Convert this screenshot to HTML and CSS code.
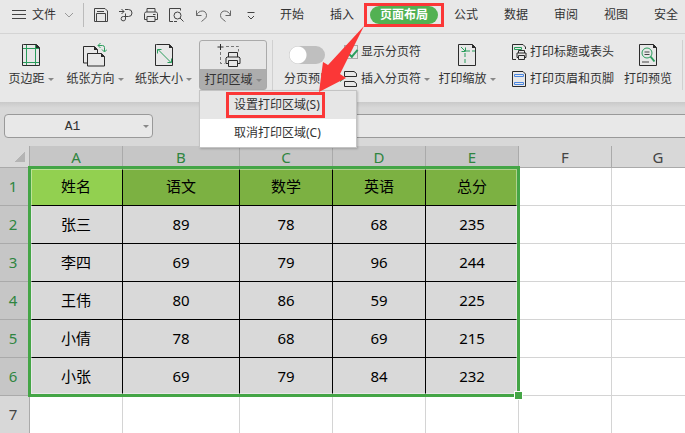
FILE: index.html
```html
<!DOCTYPE html>
<html lang="zh-CN">
<head>
    <meta charset="UTF-8">
    <meta name="viewport" content="width=device-width, initial-scale=1.0">
    <title>表格 - 页面布局</title>
    <link rel="stylesheet" href="styles.css">
</head>
<body>
    <header class="topbar">
        <button class="file-btn">
            <svg class="icon" width="14" height="12" viewBox="0 0 14 12"><path d="M0 1.500h14M0 5.500h14M0 9.500h14"/></svg>
            <span>文件</span>
            <svg class="icon muted" width="10" height="8" viewBox="0 0 10 8"><path d="M1 2l4 4 4-4"/></svg>
        </button>
        <div class="quick">
            <button aria-label="保存"><svg class="icon" width="16" height="16" viewBox="0 0 16 16"><path d="M1.500 1.500h10.500l2.500 2.500v10.500h-13zM3.500 14v-7.500h9v7.500M4 4.500h7"/></svg></button>
            <button aria-label="输出"><svg class="icon" width="16" height="16" viewBox="0 0 16 16"><path d="M1 4.500h5M3.500 2l2.500 2.500-2.500 2.500M7 2.500h3.500a3.500 3.500 0 0 1 0 7h-5a2.200 2.200 0 1 0 2 2.500v-5.500"/></svg></button>
            <button aria-label="打印"><svg class="icon" width="16" height="16" viewBox="0 0 16 16"><path d="M4 5v-3.500h8v3.500M4 12.500h-2.500v-6l1-1.500h11l1 1.500v6h-2.500M4 9.500h8v5h-8zM10 7.500h2.500"/></svg></button>
            <button aria-label="打印预览"><svg class="icon" width="16" height="16" viewBox="0 0 16 16"><path d="M5 14.500h-3.500v-13h11v2M6 14.500h3"/><circle cx="9.500" cy="8.500" r="3.500"/><path d="M12 11l3.500 3.500"/></svg></button>
            <button aria-label="撤销"><svg class="icon soft" width="16" height="16" viewBox="0 0 16 16"><path d="M3.500 3.500v5h5M3.500 8.500c2-6 10-6 10 0 0 3-3 4-5 6"/></svg></button>
            <button aria-label="恢复"><svg class="icon soft" width="16" height="16" viewBox="0 0 16 16"><path d="M12.500 3.500v5h-5M12.500 8.500c-2-6-10-6-10 0 0 3 3 4 5 6"/></svg></button>
            <button aria-label="更多"><svg class="icon" width="16" height="16" viewBox="0 0 16 16"><path d="M4.500 5.500h7M5 9l3 3 3-3"/></svg></button>
        </div>
        <nav class="tabs">
            <a href="#">开始</a>
            <a href="#">插入</a>
            <a href="#" class="active">页面布局</a>
            <a href="#">公式</a>
            <a href="#">数据</a>
            <a href="#">审阅</a>
            <a href="#">视图</a>
            <a href="#">安全</a>
        </nav>
    </header>

    <section class="ribbon">
        <button class="tool margins">
            <svg class="icon" width="24" height="24" viewBox="0 0 24 24"><path class="green" d="M7.500 2v20M16.500 2v20M4 5.500h16M4 19.500h16"/><path class="dark" d="M4.500 1.500h13l3 3v18h-17v-21z"/><path class="fill" d="M17 1l4 4h-4z"/></svg>
            <span class="caption">页边距<i class="caret"></i></span>
        </button>
        <button class="tool orient">
            <svg class="icon" width="24" height="24" viewBox="0 0 24 24"><path class="dark" d="M4.500 20h-4v-16.500h11l3 3v3.500M4.500 10.500h14l3 3v9.500h-17z"/><path class="fill" d="M11 3l4 4h-4zM18 10l4 4h-4z"/><path class="green" d="M17.500 0l-2.500 2.500 2.500 2.500M15 2.500h4.500a2 2 0 0 1 2 2v4M19 6.500l2.500 2.500 2.500-2.500"/></svg>
            <span class="caption">纸张方向<i class="caret"></i></span>
        </button>
        <button class="tool size">
            <svg class="icon" width="24" height="24" viewBox="0 0 24 24"><path class="green" d="M6 6.500l13 13M5.500 10.500v-4h4M19.500 15.500v4h-4"/><path class="dark" d="M4.500 1.500h13l3 3v18h-17v-21z"/><path class="fill" d="M17 1l4 4h-4z"/></svg>
            <span class="caption">纸张大小<i class="caret"></i></span>
        </button>
        <div class="area-wrap">
            <button class="tool area">
                <svg class="icon" width="28" height="24" viewBox="0 0 28 24"><path class="dark" d="M5.500 0v6M2.500 3h6M13.500 13v-4.500h9v4.500M13.500 19.500h-2.500v-5.500l1-1h12l1 1v5.500h-2.500M13.500 16.500h9v6h-9z"/><path class="dash" d="M11 2.500h12.500v5M5.500 8v11.500h4"/></svg>
                <span class="caption">打印区域<i class="caret"></i></span>
            </button>
            <div class="menu">
                <button class="menu-item hover">设置打印区域(S)</button>
                <button class="menu-item">取消打印区域(C)</button>
            </div>
        </div>
        <div class="breaks">
            <label class="tool preview">
                <input type="checkbox" class="switch">
                <span class="caption">分页预览</span>
            </label>
            <div class="rows">
                <label class="row"><input type="checkbox" class="tick" checked>显示分页符</label>
                <button class="row">
                    <svg class="icon" width="18" height="18" viewBox="0 0 18 18"><path class="dark" d="M4.500 1.500v5h12v-3l-2.500-2h-9.500M4.500 16.500v-5h9.500l2.500 2v3z"/><path class="green-fill" d="M0 6l4 3-4 3z"/></svg>
                    插入分页符<i class="caret"></i>
                </button>
            </div>
        </div>
        <button class="tool scale">
            <svg class="icon" width="24" height="24" viewBox="0 0 24 24"><path class="dark" d="M3.500 1.500h14l3 3v18h-17z"/><path class="fill" d="M17 1l4 4h-4z"/><path class="green" d="M6 4l4 4M10.500 4.500v4h-4"/><path class="green dashed" d="M11 8h9M10 10v12"/></svg>
            <span class="caption">打印缩放<i class="caret"></i></span>
        </button>
        <div class="rows titles">
            <button class="row">
                <svg class="icon" width="16" height="16" viewBox="0 0 16 16"><path class="dark" d="M5 15.500h-3.500v-15h10.500l2.500 2.500v2M7.500 9v-2.500h6v2.500M7.500 13.500h-1.500v-4.500h9v4.500h-1.500M7.500 11.500h6v4h-6z"/><path class="green" d="M3.500 3.500h7v2h-7z"/></svg>
                打印标题或表头
            </button>
            <button class="row">
                <svg class="icon" width="16" height="16" viewBox="0 0 16 16"><path class="dark" d="M1.500.5h10.500l2.500 2.500v12.500h-13z"/><path class="blue" d="M3.500 3.500h9v2h-9zM3.500 11.500h9v2h-9z"/></svg>
                打印页眉和页脚
            </button>
        </div>
        <button class="tool print">
            <svg class="icon" width="24" height="24" viewBox="0 0 24 24"><path class="dark" d="M3.500 1.500h14l3 3v18h-17z"/><path class="fill" d="M17 1l4 4h-4z"/><circle class="green" cx="11" cy="10" r="5"/><path class="green thick" d="M14.500 13.500l4 5"/><path d="M8.500 9h5M8.500 11.500h5M6 19h7"/></svg>
            <span class="caption">打印预览</span>
        </button>
    </section>

    <div class="formula-bar">
        <div class="name-box">
            <input type="text" value="A1" aria-label="名称框">
            <i class="caret"></i>
        </div>
        <input type="text" class="formula" aria-label="编辑栏">
    </div>

    <main class="sheet">
        <table>
            <colgroup><col class="c-num"><col><col class="c-wide"><col><col><col><col><col></colgroup>
            <thead>
                <tr><th class="corner"></th><th class="on">A</th><th class="on">B</th><th class="on">C</th><th class="on">D</th><th class="on">E</th><th>F</th><th>G</th></tr>
            </thead>
            <tbody>
                <tr class="sel title"><th>1</th><td class="first">姓名</td><td>语文</td><td>数学</td><td>英语</td><td>总分</td><td></td><td></td></tr>
                <tr class="sel"><th>2</th><td>张三</td><td>89</td><td>78</td><td>68</td><td>235</td><td></td><td></td></tr>
                <tr class="sel"><th>3</th><td>李四</td><td>69</td><td>79</td><td>96</td><td>244</td><td></td><td></td></tr>
                <tr class="sel"><th>4</th><td>王伟</td><td>80</td><td>86</td><td>59</td><td>225</td><td></td><td></td></tr>
                <tr class="sel"><th>5</th><td>小倩</td><td>78</td><td>68</td><td>69</td><td>215</td><td></td><td></td></tr>
                <tr class="sel"><th>6</th><td>小张</td><td>69</td><td>79</td><td>84</td><td>232</td><td></td><td></td></tr>
                <tr><th>7</th><td></td><td></td><td></td><td></td><td></td><td></td><td></td></tr>
            </tbody>
        </table>
        <div class="selection"></div>
    </main>

    <svg class="arrow" width="60" height="74" viewBox="0 0 60 74"><path d="M54 2L18 41 13 38 9 68 36 54 30 50z"/></svg>
</body>
</html>
```
FILE: styles.css
```css
* {
    box-sizing: border-box;
}
body {
    margin: 0;
    height: 100vh;
    overflow: hidden;
    position: relative;
    display: flex;
    flex-direction: column;
    background: #fff;
    color: #333;
    font-family: "Noto Sans", "Noto Sans CJK SC", sans-serif;
    font-size: 12px;
    line-height: 18px;
}
button, input {
    margin: 0;
    padding: 0;
    border: 0;
    background: none;
    color: inherit;
    font: inherit;
}
svg {
    display: block;
    flex: none;
}
.icon {
    fill: none;
    stroke: #444;
}
.icon.muted {
    stroke: #999;
}
.icon.soft {
    stroke: #666;
}
.icon .dark {
    stroke: #2b2b2b;
}
.icon .fill {
    fill: #2b2b2b;
    stroke: none;
}
.icon .green {
    stroke: #2a9d5c;
}
.icon .green-fill {
    fill: #2a9d5c;
    stroke: none;
}
.icon .thick {
    stroke-width: 2;
}
.icon .blue {
    stroke: #4a86e0;
}
.icon .dash {
    stroke: #777;
    stroke-dasharray: 3 2;
}
.icon .dashed {
    stroke-dasharray: 4 2;
}
.caret {
    display: inline-block;
    flex: none;
    margin-left: 3px;
    border: 3px solid transparent;
    border-top-color: #888;
    border-bottom: 0;
    vertical-align: middle;
}

/* top bar */
.topbar {
    display: flex;
    align-items: center;
    flex: none;
    height: 34px;
    padding-bottom: 4px;
    background: #e8e8e8;
    border-bottom: 1px solid #d4d4d4;
    white-space: nowrap;
}
.file-btn {
    display: flex;
    align-items: center;
    flex: none;
    gap: 6px;
    height: 24px;
    padding: 0 9px 0 12px;
    border-right: 1px solid #bbb;
}
.file-btn span {
    margin-right: 2px;
}
.quick {
    display: flex;
    flex: none;
    gap: 9px;
    padding-left: 9px;
}
.tabs {
    display: flex;
    margin-left: 8px;
}
.tabs a {
    flex: none;
    width: 50px;
    color: #333;
    text-align: center;
    text-decoration: none;
}
.tabs .active {
    position: relative;
    width: 68px;
    margin: 0 3px;
    border-radius: 9px;
    background: #52b152;
    color: #fff;
    font-weight: bold;
}
.tabs .active::after {
    content: "";
    position: absolute;
    inset: -3px -6px;
    border: 3px solid #fb3737;
}

/* ribbon */
.ribbon {
    display: flex;
    flex: none;
    height: 68px;
    padding-top: 6px;
    background: #e8e8e8;
    white-space: nowrap;
}
.tool {
    display: flex;
    flex-direction: column;
    align-items: center;
    flex: none;
    height: 50px;
    padding-top: 3px;
    gap: 3px;
}
.caption {
    display: block;
}
.margins {
    width: 62px;
}
.orient {
    width: 66px;
}
.size {
    width: 71px;
}
.area-wrap {
    position: relative;
    flex: none;
}
.area {
    width: 68px;
    border: 1px solid #aaa;
    border-radius: 3px;
    background: linear-gradient(#e6e6e6 28px, #adadad 28px);
}
.area .icon {
    margin-right: 8px;
}
.menu {
    position: absolute;
    z-index: 2;
    top: 50px;
    left: 0;
    width: 158px;
    border: 1px solid #c4c4c4;
    background: #fff;
    box-shadow: 1px 1px 2px rgba(0, 0, 0, 0.2);
}
.menu-item {
    display: block;
    position: relative;
    width: 100%;
    height: 28px;
    padding-left: 34px;
    text-align: left;
}
.menu-item.hover {
    background: #e6e6e6;
}
.menu-item.hover::after {
    content: "";
    position: absolute;
    inset: 1px 31px 1px 26px;
    border: 3px solid #fb3737;
}
.breaks {
    display: flex;
    flex: none;
    height: 58px;
    margin-left: 5px;
    padding-left: 7px;
    border-left: 1px solid #d0d0d0;
}
.preview {
    width: 56px;
}
.switch {
    appearance: none;
    width: 36px;
    height: 18px;
    margin: 3px;
    border-radius: 9px;
    background: radial-gradient(circle at 9px 9px, #fff 8px, #bfbfbf 9px);
}
.preview .switch {
    align-self: flex-start;
    margin-left: 9px;
}
.rows {
    display: flex;
    flex-direction: column;
    flex: none;
    gap: 9px;
    padding-top: 3px;
}
.breaks .rows {
    margin-left: 4px;
}
.row {
    display: flex;
    align-items: center;
    height: 18px;
    gap: 3px;
}
.tick {
    appearance: none;
    width: 14px;
    height: 14px;
    margin-left: 4px;
    border: 1px solid #aaa;
    position: relative;
}
.tick:checked::before {
    content: "";
    position: absolute;
    top: 1px;
    left: 4px;
    width: 5px;
    height: 8px;
    border: solid #2a9d5c;
    border-width: 0 2px 2px 0;
    transform: rotate(40deg);
}
.row .caret {
    margin-left: 0;
}
.scale {
    width: 74px;
}
.titles {
    margin-left: 7px;
}
.print {
    width: 69px;
    border-right: 1px solid #d0d0d0;
}

/* name box and formula input */
.formula-bar {
    display: flex;
    flex: none;
    height: 44px;
    padding-top: 12px;
    background: linear-gradient(#c9c9c9, #d8d8d8 6px);
}
.name-box {
    display: flex;
    align-items: center;
    flex: none;
    width: 149px;
    height: 24px;
    margin-left: 4px;
    padding-right: 3px;
    border: 1px solid #999;
    border-radius: 4px;
    background: #e8e8e8;
}
.name-box input {
    flex: 1;
    min-width: 0;
    padding-top: 2px;
    font-family: "Liberation Mono", monospace;
    font-size: 13px;
    text-align: center;
}
.formula {
    flex: 1;
    height: 24px;
    margin-left: 150px;
    border: 1px solid #999;
    border-right: 0;
    background: #e8e8e8;
}

/* sheet */
.sheet {
    position: relative;
    flex: 1;
    overflow: hidden;
}
table {
    width: 705px;
    table-layout: fixed;
    border-collapse: separate;
    border-spacing: 0;
}
col {
    width: 93px;
}
.c-num {
    width: 30px;
}
.c-wide {
    width: 117px;
}
th, td {
    height: 38px;
    padding: 0 0 2px;
    border-right: 1px solid #d4d4d4;
    border-bottom: 1px solid #d4d4d4;
    color: #000;
    font-size: 15px;
    line-height: 20px;
    text-align: center;
}
th {
    padding-right: 3px;
    border-color: #aaa;
    background: #d8d8d8;
    color: #444;
    font-weight: normal;
}
thead th {
    height: 22px;
    padding: 0;
}
thead .on, .sel th {
    background: #c6c6c6;
    color: #2f8540;
}
.sel td:nth-child(-n+6) {
    border-color: #000;
    background: #d9d9d9;
}
.title td:nth-child(-n+6) {
    background: #7cb142;
}
.title td.first {
    background: #92d050;
}
thead .corner {
    background: linear-gradient(135deg, #d8d8d8 50%, #b4b4b4 50%) 14px 5px / 11px 11px no-repeat #d8d8d8;
}
.selection {
    position: absolute;
    top: 20px;
    left: 28px;
    width: 492px;
    height: 231px;
    border: 3px solid #44a546;
    box-shadow: inset 0 0 0 1px rgba(255, 255, 255, 0.4);
}
.selection::after {
    content: "";
    position: absolute;
    right: -6px;
    bottom: -6px;
    width: 7px;
    height: 7px;
    border: 1px solid #fff;
    background: #44a546;
}
.arrow {
    position: absolute;
    z-index: 3;
    top: 24px;
    left: 310px;
    fill: #fb3737;
}
```
